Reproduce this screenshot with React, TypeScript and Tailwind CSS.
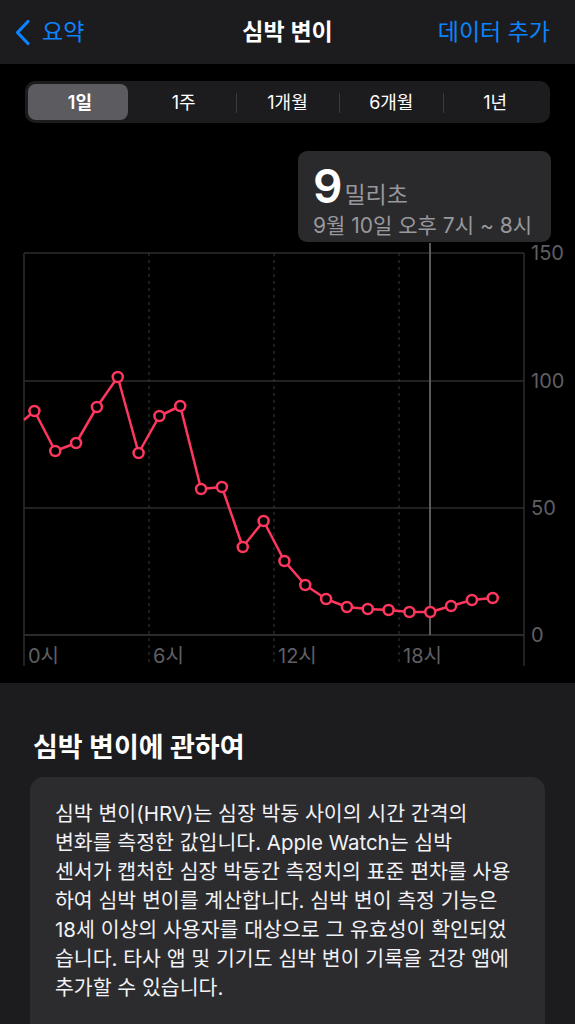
import React from "react";

const FONT = "font-['Inter','Noto_Sans_CJK_KR',sans-serif]";

// hourly HRV points (page y coordinates inside the chart)
const YS = [411, 451, 443, 407, 377, 453, 416, 406, 489, 487, 547, 521, 561, 585, 599, 607, 609, 610, 612, 612, 606, 600, 598];
const LEFT = 24;
const RIGHT = 524;
const STEP = (RIGHT - LEFT) / 24;

const SEGMENTS = ["1일", "1주", "1개월", "6개월", "1년"];

function Chart() {
  const pts = YS.map((y, i) => ({ x: LEFT + STEP * (i + 0.5), y }));
  const line = [`${LEFT},420`, ...pts.map((p) => `${p.x},${p.y}`)].join(" ");
  const hLines = [
    { y: 253, label: "150" },
    { y: 381, label: "100" },
    { y: 508, label: "50" },
    { y: 635, label: "0" },
  ];
  const vDash = [149, 274, 399];
  const xLabels = [
    { x: 28, t: "0시" },
    { x: 153, t: "6시" },
    { x: 278, t: "12시" },
    { x: 403, t: "18시" },
  ];

  return (
    <svg
      className="absolute inset-0"
      width={575}
      height={560}
      viewBox="0 123 575 560"
    >
      {hLines.map((h) => (
        <line key={h.y} x1={LEFT} x2={RIGHT} y1={h.y} y2={h.y} stroke={h.y === 635 ? "#3a3a3c" : "#2c2c2e"} strokeWidth={1.5} />
      ))}
      <line x1={LEFT} x2={LEFT} y1={253} y2={666} stroke="#2c2c2e" strokeWidth={1.5} />
      <line x1={RIGHT} x2={RIGHT} y1={253} y2={666} stroke="#2c2c2e" strokeWidth={1.5} />
      {vDash.map((x) => (
        <line key={x} x1={x} x2={x} y1={253} y2={666} stroke="#3a3a3c" strokeWidth={1} strokeDasharray="3 4" />
      ))}
      <line x1={430} x2={430} y1={243} y2={635} stroke="#5a5a5e" strokeWidth={2} />
      {hLines.map((h) => (
        <text key={h.label} x={531} y={h.y} dominantBaseline="central" fill="#5f5f63" fontSize={20} fontFamily="Inter, 'Noto Sans CJK KR', sans-serif">
          {h.label}
        </text>
      ))}
      {xLabels.map((l) => (
        <text key={l.t} x={l.x} y={656} dominantBaseline="central" fill="#5f5f63" fontSize={20} fontFamily="Inter, 'Noto Sans CJK KR', sans-serif">
          {l.t}
        </text>
      ))}
      <polyline points={line} fill="none" stroke="#ff375f" strokeWidth={2.5} strokeLinejoin="round" />
      {pts.map((p, i) => (
        <circle key={i} cx={p.x} cy={p.y} r={5} fill="#000" stroke="#ff375f" strokeWidth={2.5} />
      ))}
    </svg>
  );
}

export default function App() {
  return (
    <div className={`w-[575px] h-[1024px] overflow-hidden bg-black ${FONT}`}>
      {/* nav bar */}
      <div className="grid h-16 grid-cols-[1fr_auto_1fr] items-center bg-[#1c1c1e]">
        <div className="flex items-center gap-[11px] pl-[14px] text-[#0a84ff]">
          <svg width="17" height="27" viewBox="0 0 17 27">
            <path d="M14 2.5 L3.5 13.5 L14 24.5" fill="none" stroke="#0a84ff" strokeWidth="3.2" strokeLinecap="round" strokeLinejoin="round" />
          </svg>
          <span className="text-[23px] leading-none">요약</span>
        </div>
        <div className="text-[23px] font-semibold leading-none text-white">심박 변이</div>
        <div className="pr-[25px] text-right text-[23px] leading-none text-[#0a84ff]">데이터 추가</div>
      </div>

      {/* range picker */}
      <div className="px-[25px] pt-[17px]">
        <div className="grid h-[42px] grid-cols-5 rounded-[10px] bg-[#1c1c1e] p-[3px]">
          {SEGMENTS.map((s, i) => (
            <div key={s} className="relative flex items-center justify-center">
              {i === 0 && <div className="absolute inset-y-0 left-0 right-[4px] rounded-[8px] bg-[#5c5c60]" />}
              {i > 1 && <div className="absolute left-0 top-[9px] h-[20px] w-px bg-[#3a3a3c]" />}
              <span className={`relative text-[18px] text-white ${i === 0 ? "font-semibold" : ""}`}>{s}</span>
            </div>
          ))}
        </div>
      </div>

      {/* chart */}
      <div className="relative h-[560px]">
        <Chart />
        <div className="absolute left-[298px] top-[28px] h-[91px] w-[253px] rounded-[9px] bg-[#2a2a2c] px-[15px] pt-[10px]">
          <div className="flex items-baseline">
            <span className="text-[46px] font-semibold leading-[50px] text-white">9</span>
            <span className="ml-[2px] text-[23px] text-[#98989d]">밀리초</span>
          </div>
          <div className="mt-[1px] whitespace-nowrap text-[21px] leading-[24px] text-[#98989d]">9월 10일 오후 7시 ~ 8시</div>
        </div>
      </div>

      {/* about */}
      <div className="h-[341px] bg-[#1c1c1e] px-[30px] pt-[48px]">
        <h2 className="pl-[3px] text-[27px] font-bold leading-[34px] text-white">심박 변이에 관하여</h2>
        <div className="mt-[12px] h-[300px] whitespace-nowrap rounded-[14px] bg-[#2c2c2e] pl-[25px] pr-[10px] pt-[22px] text-[20.5px] leading-[29px] text-[#f2f2f7]">
          심박 변이(HRV)는 심장 박동 사이의 시간 간격의
          <br />
          변화를 측정한 값입니다. Apple Watch는 심박
          <br />
          센서가 캡처한 심장 박동간 측정치의 표준 편차를 사용
          <br />
          하여 심박 변이를 계산합니다. 심박 변이 측정 기능은
          <br />
          18세 이상의 사용자를 대상으로 그 유효성이 확인되었
          <br />
          습니다. 타사 앱 및 기기도 심박 변이 기록을 건강 앱에
          <br />
          추가할 수 있습니다.
        </div>
      </div>
    </div>
  );
}
